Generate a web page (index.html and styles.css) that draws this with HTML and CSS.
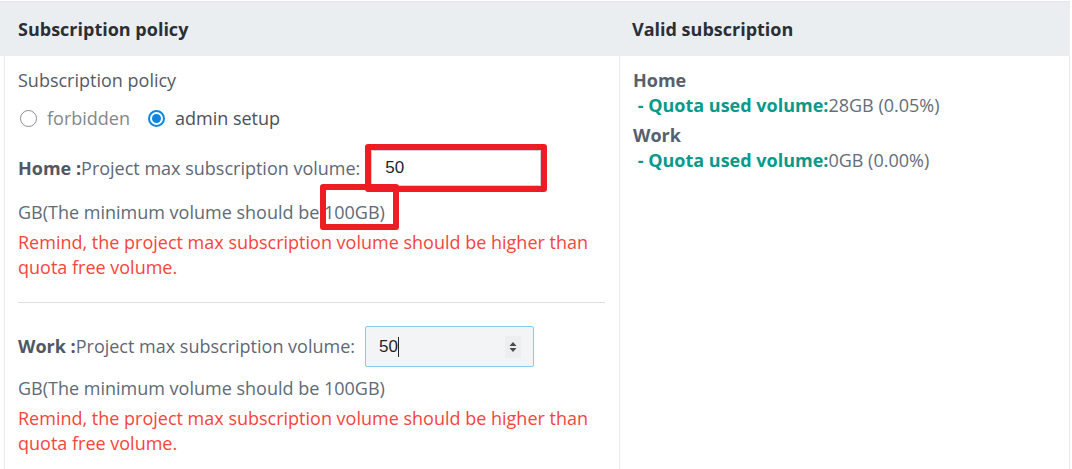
FILE: index.html
```html
<!DOCTYPE html>
<html lang="en">
<head>
    <meta charset="UTF-8">
    <meta name="viewport" content="width=device-width, initial-scale=1.0">
    <title>Subscription policy</title>
    <link rel="stylesheet" href="styles.css">
</head>
<body>
    <div class="policy-table">
        <div class="head-row">
            <div class="head-cell">Subscription policy</div>
            <div class="head-cell right">Valid subscription</div>
        </div>
        <div class="body-row">
            <div class="cell left">
                <div class="title">Subscription policy</div>
                <div class="radios">
                    <label class="radio"><span class="dot"></span><span class="off">forbidden</span></label>
                    <label class="radio"><span class="dot checked"></span><span>admin setup</span></label>
                </div>

                <div class="field-row home-row">
                    <span class="label"><b>Home :</b>Project max subscription volume:</span>
                    <span class="mark-box"><input type="text" class="vol-input" value="50"></span>
                </div>
                <div class="hint">GB(The minimum volume should be <span class="mark-text">100GB)</span></div>
                <div class="warn">Remind, the project max subscription volume should be higher than quota free volume.</div>

                <hr class="sep">

                <div class="field-row work-row">
                    <span class="label"><b>Work :</b>Project max subscription volume:</span>
                    <span class="num-wrap">
                        <input type="text" class="vol-input focused" value="50">
                        <span class="caret"></span>
                        <span class="spinner">
                            <svg width="16" height="22" viewBox="0 0 16 22">
                                <path d="M8 6 L11.5 10 L4.5 10 Z" fill="#4a4a4a"/>
                                <path d="M8 16 L11.5 12 L4.5 12 Z" fill="#4a4a4a"/>
                            </svg>
                        </span>
                    </span>
                </div>
                <div class="hint work-hint">GB(The minimum volume should be 100GB)</div>
                <div class="warn">Remind, the project max subscription volume should be higher than quota free volume.</div>
            </div>
            <div class="cell right">
                <div class="usage">
                    <div class="usage-name">Home</div>
                    <div class="usage-line"><span class="usage-key">&nbsp;- Quota used volume:</span>28GB (0.05%)</div>
                </div>
                <div class="usage">
                    <div class="usage-name">Work</div>
                    <div class="usage-line"><span class="usage-key">&nbsp;- Quota used volume:</span>0GB (0.00%)</div>
                </div>
            </div>
        </div>
    </div>
</body>
</html>
```

FILE: styles.css
```css
body {
    margin: 0;
    padding-top: 1px;
    font-family: "Open Sans", "Noto Sans", sans-serif;
    font-size: 18px;
    line-height: 25px;
    color: #606a77;
    background: #fff;
}
.policy-table {
    width: 1070px;
}
.head-row {
    display: grid;
    grid-template-columns: 618px 1fr;
    height: 54px;
    align-items: center;
    background-color: #ebeef1;
    border-top: 1px solid #e3e7eb;
}
.head-cell {
    padding-left: 18px;
    color: #2a2e35;
    font-weight: 700;
    font-size: 18px;
}
.head-cell.right {
    padding-left: 14px;
}
.body-row {
    display: grid;
    grid-template-columns: 614px 1fr;
    margin-left: 4px;
    border-left: 1px solid #e6eaee;
    border-right: 1px solid #e6eaee;
    height: 420px;
}
.cell {
    padding: 12px 14px 0 13px;
}
.cell.right {
    border-left: 1px solid #e6eaee;
    padding-left: 13px;
}

.title {
    color: #555b63;
}
.radios {
    display: flex;
    gap: 18px;
    margin-top: 13px;
    padding-left: 2px;
}
.radio {
    display: flex;
    align-items: center;
    gap: 10px;
    color: #4b5058;
}
.radio .off {
    color: #83878d;
}
.dot {
    width: 17px;
    height: 17px;
    border: 1px solid #8a8d92;
    border-radius: 50%;
    box-sizing: border-box;
    position: relative;
}
.dot.checked {
    border: 2px solid #0d86e0;
}
.dot.checked::after {
    content: "";
    position: absolute;
    left: 2px;
    top: 2px;
    width: 9px;
    height: 9px;
    border-radius: 50%;
    background: #0d86e0;
}

.field-row {
    display: flex;
    align-items: center;
}
.label {
    color: #5f6874;
}
.label b {
    color: #4f5864;
}
.home-row {
    margin-top: 13px;
}
.home-row .label {
    margin-right: 5px;
}
.work-row {
    margin-top: 23px;
}
.work-row .label {
    margin-right: 10px;
}

.mark-box {
    display: inline-block;
    border: 6px solid #ee1d25;
    border-radius: 3px;
    line-height: 0;
}
.vol-input {
    width: 170px;
    height: 36px;
    box-sizing: border-box;
    margin: 0;
    padding: 0 12px 0 13px;
    font-family: "Liberation Sans", Arial, sans-serif;
    font-size: 17px;
    color: #1f2328;
    border: 1px solid #cfd3d8;
    border-radius: 0;
    background: #fff;
    outline: none;
}
.num-wrap {
    position: relative;
    display: inline-block;
    line-height: 0;
}
.vol-input.focused {
    width: 169px;
    height: 41px;
    background: #f3f4f6;
    border: 1px solid #84cdf0;
    border-radius: 2px;
}
.caret {
    position: absolute;
    left: 33px;
    top: 11px;
    width: 1px;
    height: 20px;
    background: #1f2328;
}
.spinner {
    position: absolute;
    right: 13px;
    top: 10px;
    width: 16px;
    height: 22px;
    background: #eceef0;
}

.hint {
    margin-top: 8px;
}
.work-hint {
    margin-top: 9px;
}
.mark-text {
    position: relative;
}
.mark-text::after {
    content: "";
    position: absolute;
    left: -4px;
    right: -14px;
    top: -16px;
    bottom: -6px;
    border: 6px solid #ee1d25;
    border-radius: 3px;
}
.warn {
    margin-top: 5px;
    color: #f6453c;
}
.sep {
    border: none;
    border-top: 1px solid #dcdfe3;
    margin: 22px 0 0 0;
}

.usage {
    margin-bottom: 5px;
}
.usage-name {
    font-weight: 700;
    color: #56606c;
}
.usage-line {
    color: #646d78;
}
.usage-key {
    font-weight: 700;
    color: #07998a;
}
```
